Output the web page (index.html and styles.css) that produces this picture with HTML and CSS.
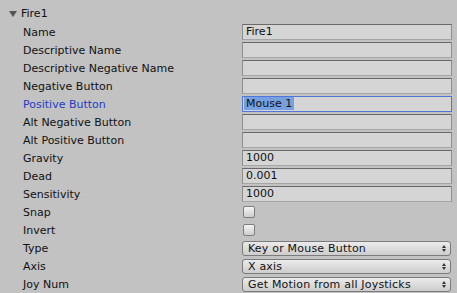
FILE: index.html
```html
<!DOCTYPE html>
<html lang="en">
<head>
  <meta charset="UTF-8">
  <title>Input Axis - Fire1</title>
  <link rel="stylesheet" href="styles.css">
</head>
<body>
  <div class="inspector">
    <div class="foldout">
      <span class="arrow"></span>
      <span>Fire1</span>
    </div>

    <div class="row">
      <label>Name</label>
      <div class="field">Fire1</div>
    </div>
    <div class="row">
      <label>Descriptive Name</label>
      <div class="field"></div>
    </div>
    <div class="row">
      <label>Descriptive Negative Name</label>
      <div class="field"></div>
    </div>
    <div class="row">
      <label>Negative Button</label>
      <div class="field"></div>
    </div>
    <div class="row active">
      <label>Positive Button</label>
      <div class="field"><span class="selection">Mouse 1</span></div>
    </div>
    <div class="row">
      <label>Alt Negative Button</label>
      <div class="field"></div>
    </div>
    <div class="row">
      <label>Alt Positive Button</label>
      <div class="field"></div>
    </div>
    <div class="row">
      <label>Gravity</label>
      <div class="field">1000</div>
    </div>
    <div class="row">
      <label>Dead</label>
      <div class="field">0.001</div>
    </div>
    <div class="row">
      <label>Sensitivity</label>
      <div class="field">1000</div>
    </div>
    <div class="row">
      <label>Snap</label>
      <div class="checkbox"></div>
    </div>
    <div class="row">
      <label>Invert</label>
      <div class="checkbox"></div>
    </div>
    <div class="row">
      <label>Type</label>
      <div class="popup">Key or Mouse Button<span class="updown"></span></div>
    </div>
    <div class="row">
      <label>Axis</label>
      <div class="popup">X axis<span class="updown"></span></div>
    </div>
    <div class="row">
      <label>Joy Num</label>
      <div class="popup">Get Motion from all Joysticks<span class="updown"></span></div>
    </div>
  </div>
</body>
</html>
```

FILE: styles.css
```css
body {
  margin: 0;
  background-color: #c2c2c2;
  font-family: "DejaVu Sans", sans-serif;
  font-size: 11px;
  color: #111;
}

.inspector {
  padding: 4px 5px 0 9px;
}

.foldout {
  display: flex;
  align-items: center;
  gap: 4px;
  height: 19px;
}

.arrow {
  width: 0;
  height: 0;
  border-left: 4px solid transparent;
  border-right: 4px solid transparent;
  border-top: 6px solid #555;
}

.row {
  display: flex;
  align-items: center;
  height: 18px;
  padding-left: 14px;
}

.row label {
  width: 219px;
  flex-shrink: 0;
}

.row.active label {
  color: #1d3ec3;
}

.field {
  flex: 1;
  height: 16px;
  box-sizing: border-box;
  background: #d5d5d5;
  border: 1px solid #8e8e8e;
  border-top-color: #6a6a6a;
  border-bottom-color: #a6a6a6;
  padding: 0 3px;
  line-height: 14px;
  white-space: nowrap;
}

.row.active .field {
  border: 1px solid #4f76d8;
  padding-left: 1px;
}

.selection {
  background: #77a0e0;
  padding: 0 2px;
}

.checkbox {
  width: 12px;
  height: 12px;
  box-sizing: border-box;
  margin-left: 1px;
  border: 1px solid #7d7d7d;
  border-radius: 2px;
  background: linear-gradient(#f4f4f4, #cdcdcd);
}

.popup {
  flex: 1;
  position: relative;
  height: 15px;
  box-sizing: border-box;
  margin-right: 1px;
  border: 1px solid #7b7b7b;
  border-radius: 3px;
  background: linear-gradient(#ebebeb, #cdcdcd);
  padding-left: 5px;
  line-height: 13px;
  font-weight: 500;
  letter-spacing: 0.2px;
}

.updown {
  position: absolute;
  right: 4px;
  top: 3px;
  width: 0;
  height: 0;
  border-left: 2px solid transparent;
  border-right: 2px solid transparent;
  border-bottom: 3px solid #333;
}

.updown::after {
  content: "";
  position: absolute;
  left: -2px;
  top: 4px;
  border-left: 2px solid transparent;
  border-right: 2px solid transparent;
  border-top: 3px solid #333;
}
```
